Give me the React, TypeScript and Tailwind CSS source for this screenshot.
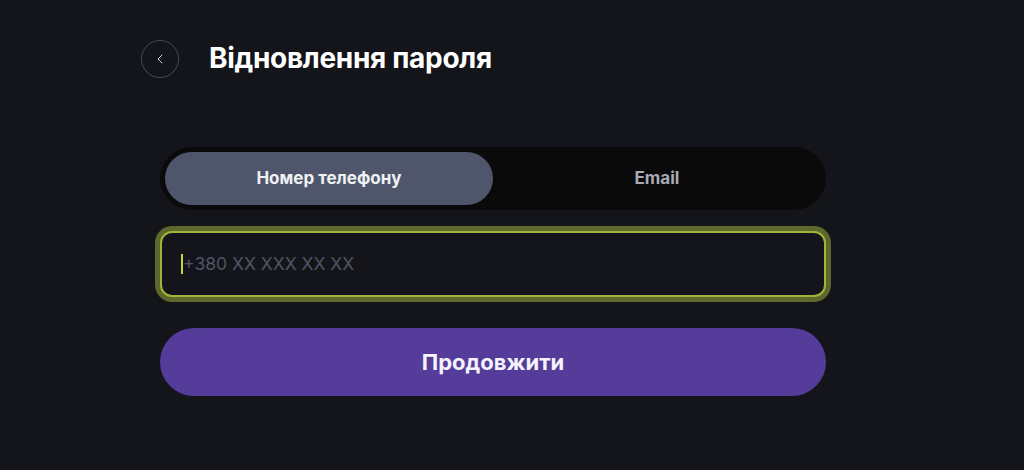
import { ChevronLeft } from "lucide-react";

const App = () => {
  return (
    <main
      className="min-h-screen w-full bg-[#14151a] pt-[39px] pl-[141px]"
      style={{ fontFamily: "Inter, 'Noto Sans', sans-serif" }}
    >
      <header className="flex items-center gap-[30px]">
        <button className="flex h-[38px] w-[38px] items-center justify-center rounded-full border border-[#464a59] text-[#d5d7de]">
          <ChevronLeft size={16} strokeWidth={1.5} />
        </button>
        <h1 className="text-[28px] leading-[39px] font-bold tracking-[-0.3px] text-white">
          Відновлення пароля
        </h1>
      </header>

      <section className="ml-[19px] mt-[69px] flex w-[666px] flex-col">
        <div className="flex h-[63px] items-center rounded-full bg-[#0a0a0b] p-[5px]">
          <button className="flex h-[53px] w-[328px] items-center justify-center rounded-full bg-[#4f566b] text-[17px] font-bold text-[#f0f1f4]">
            Номер телефону
          </button>
          <button className="flex h-[53px] flex-1 items-center justify-center text-[17px] font-bold text-[#a9abb5]">
            Email
          </button>
        </div>

        <div className="mt-[21px] flex h-[66px] items-center rounded-[12px] border-2 border-[#a0b43a] bg-[#14151a] pl-[19px] ring-[5px] ring-[#5d682c]">
          <span className="h-[20px] w-[2px] bg-[#c4d63c]" />
          <span className="text-[17.5px] text-[#4f5466]">+380 XX XXX XX XX</span>
        </div>

        <button className="mt-[31px] flex h-[68px] items-center justify-center rounded-full bg-[#553c9b] text-[22px] font-bold text-[#f4f2fa]">
          Продовжити
        </button>
      </section>
    </main>
  );
};

export default App;
